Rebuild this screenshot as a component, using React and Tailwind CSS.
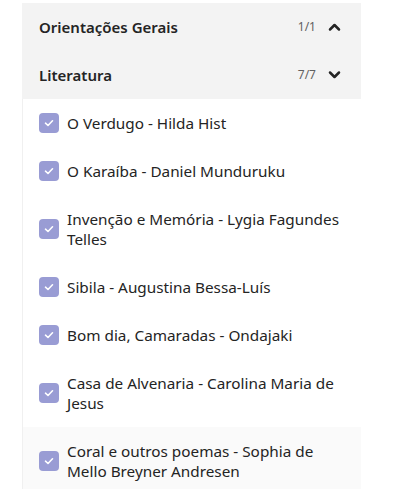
import React from 'react';

const items = [
  'O Verdugo - Hilda Hist',
  'O Karaíba - Daniel Munduruku',
  'Invenção e Memória - Lygia Fagundes Telles',
  'Sibila - Augustina Bessa-Luís',
  'Bom dia, Camaradas - Ondajaki',
  'Casa de Alvenaria - Carolina Maria de Jesus',
  'Coral e outros poemas - Sophia de Mello Breyner Andresen',
];

const Chevron = ({ up }) => (
  <svg width="13" height="12" viewBox="0 0 13 12" className="text-[#242424]">
    <path
      d={up ? 'M2 8.5 L6.5 4 L11 8.5' : 'M2 3.5 L6.5 8 L11 3.5'}
      fill="none"
      stroke="currentColor"
      strokeWidth="2.5"
      strokeLinecap="round"
      strokeLinejoin="round"
    />
  </svg>
);

const Check = () => (
  <span className="flex h-5 w-5 shrink-0 items-center justify-center rounded-[4px] bg-[#999cd4]">
    <svg width="12" height="12" viewBox="0 0 12 12">
      <path d="M2.5 6.2 L5 8.5 L9.5 3.8" fill="none" stroke="white" strokeWidth="1.6" strokeLinecap="round" strokeLinejoin="round" />
    </svg>
  </span>
);

const Header = ({ title, count, up }) => (
  <div className="flex h-12 items-center bg-[#f3f3f3] pl-[17px] pr-5">
    <span className="flex-1 text-[15px] font-semibold text-[#242424]">{title}</span>
    <span className="mr-3 text-[12px] text-[#616161]">{count}</span>
    <Chevron up={up} />
  </div>
);

export default function App() {
  return (
    <div className="min-h-[489px] bg-white pt-[3px] font-['Noto_Sans',sans-serif]">
      <div className="ml-[22px] w-[339px]">
        <Header title="Orientações Gerais" count="1/1" up />
        <Header title="Literatura" count="7/7" />
        <ul className="border-l border-[#f0f0f0]">
          {items.map((item, i) => (
            <li
              key={item}
              className={`flex items-center gap-2 py-[14px] pl-4 pr-3 ${i === items.length - 1 ? 'bg-[#fafafa]' : ''}`}
            >
              <Check />
              <span className="text-[15.3px] leading-5 text-[#242424]">{item}</span>
            </li>
          ))}
        </ul>
      </div>
    </div>
  );
}
